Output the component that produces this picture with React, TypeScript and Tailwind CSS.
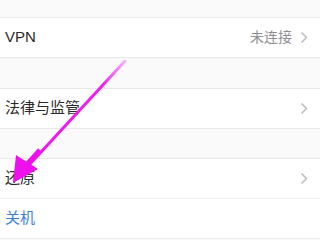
const font = { fontFamily: '"Helvetica Neue", "Liberation Sans", "Noto Sans CJK SC", sans-serif' };

const Chevron = () => (
  <svg width="8" height="13" viewBox="0 0 8 13" className="ml-[8px]">
    <path d="M1.5 1.5 L6.5 6.5 L1.5 11.5" fill="none" stroke="#bcbcc0" strokeWidth="1.5" />
  </svg>
);

type RowProps = { label: string; value?: string; chevron?: boolean; blue?: boolean };

const Row = ({ label, value, chevron, blue }: RowProps) => (
  <div className="flex h-[39px] items-center bg-white pl-[5px] pr-[12px]">
    <span className={`flex-1 text-[15px] ${blue ? "text-[#3b82d6]" : "text-[#2a2a2a]"}`}>{label}</span>
    {value && <span className="text-[14px] text-[#8e8e93]">{value}</span>}
    {chevron && <Chevron />}
  </div>
);

const App = () => {
  return (
    <div className="relative h-[240px] w-[320px] overflow-hidden bg-[#fafafa]" style={font}>
      <div className="h-[17px]" />
      <div className="border-y border-[#e8e8ea]">
        <Row label="VPN" value="未连接" chevron />
      </div>
      <div className="h-[30px]" />
      <div className="border-y border-[#e8e8ea]">
        <Row label="法律与监管" chevron />
      </div>
      <div className="h-[29px]" />
      <div className="border-y border-[#e8e8ea]">
        <div className="border-b border-[#eeeef0]">
          <Row label="还原" chevron />
        </div>
        <Row label="关机" blue />
      </div>

      {/* magenta annotation arrow */}
      <svg className="pointer-events-none absolute left-0 top-0" width="320" height="240" viewBox="0 0 320 240">
        <defs>
          <linearGradient id="fade" x1="128" y1="58" x2="30" y2="165" gradientUnits="userSpaceOnUse">
            <stop offset="0" stopColor="#f03cf0" stopOpacity="0.3" />
            <stop offset="0.25" stopColor="#f020f0" />
            <stop offset="1" stopColor="#ee11ee" />
          </linearGradient>
        </defs>
        <line x1="125" y1="61" x2="30" y2="164" stroke="url(#fade)" strokeWidth="3" strokeLinecap="round" />
        <path d="M40 150 L22 170" stroke="#ee11ee" strokeWidth="5" />
        <path d="M13 183 L16 155 L38 169 Z" fill="#ee11ee" />
      </svg>
    </div>
  );
};

export default App;
